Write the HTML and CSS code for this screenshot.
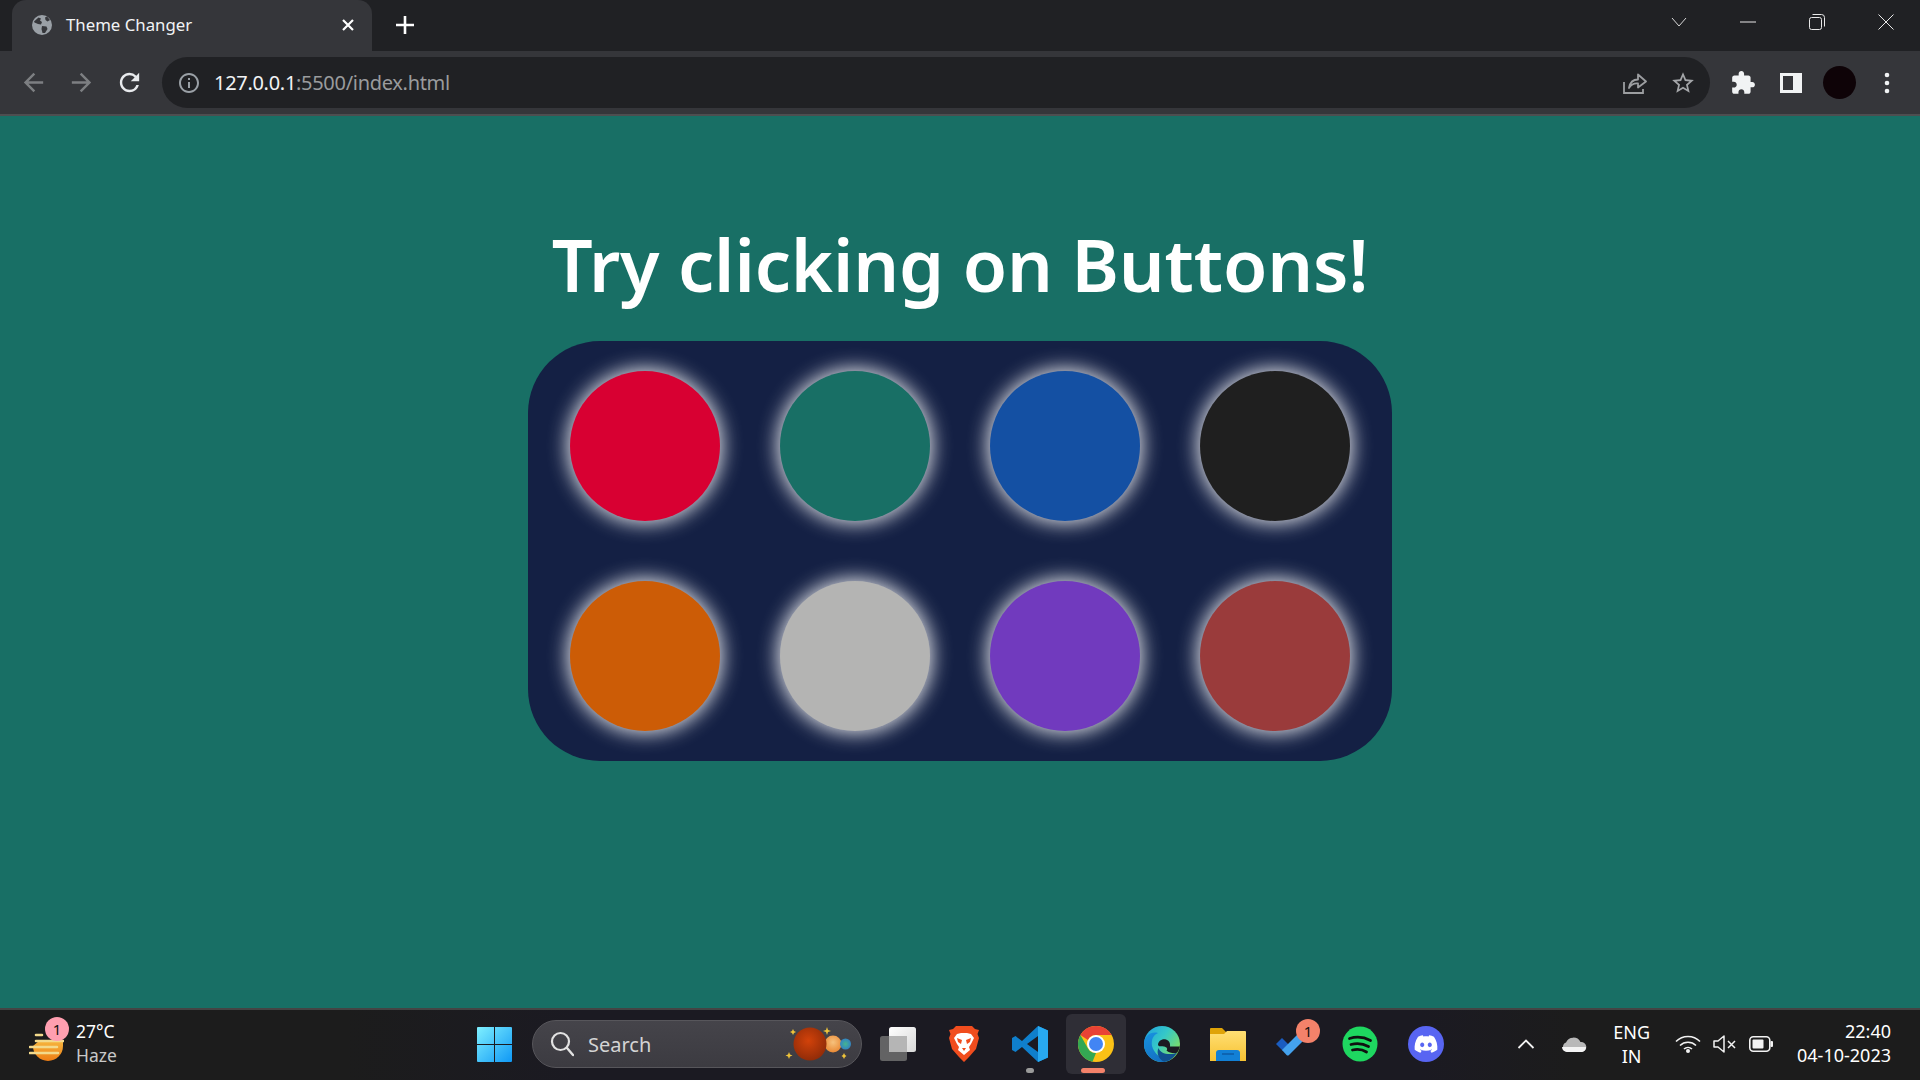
FILE: index.html
```html
<!DOCTYPE html>
<html lang="en">
<head>
<meta charset="utf-8">
<title>Theme Changer</title>
<link rel="stylesheet" href="styles.css">
</head>
<body>
<div class="tabstrip">
  <div class="tab">
    <svg class="favicon" viewBox="0 0 20 20"><circle cx="10" cy="10" r="10" fill="#9aa0a6"/><path d="M2 6.5 6.5 2.5 9 3.5 8 5.5 10 7 9 9.5 6 9 2.500 7.500Z" fill="#35363a"/><path d="M10 11 14.500 11.500 15.500 14 13 18 10.500 18 9.500 14Z" fill="#35363a"/><path d="M13 2.500 15 1.500 18 5 15.500 6.500 13.500 5Z" fill="#35363a"/></svg>
    <span class="tab-title">Theme Changer</span>
    <svg class="tab-close" viewBox="0 0 20 20"><path d="M5 5 15 15M15 5 5 15" stroke="#fff" stroke-width="2.200" fill="none"/></svg>
  </div>
  <svg class="new-tab" viewBox="0 0 20 20"><path d="M10 1V19M1 10H19" stroke="#fff" stroke-width="2.600" fill="none"/></svg>
  <div class="win-controls">
    <div class="win-btn"><svg width="16" height="10" viewBox="0 0 16 10"><path d="M1 1 8 9 15 1" stroke="#d8d8d8" fill="none"/></svg></div>
    <div class="win-btn"><svg width="16" height="4" viewBox="0 0 16 4"><path d="M0 2H16" stroke="#e8e8e8" fill="none"/></svg></div>
    <div class="win-btn"><svg width="16" height="16" viewBox="0 0 16 16"><rect x=".5" y="3.500" width="12" height="12" rx="2" stroke="#e8e8e8" fill="none"/><path d="M3.500 .5H12.500A3 3 0 0 1 15.500 3.500V12.500" stroke="#e8e8e8" fill="none"/></svg></div>
    <div class="win-btn"><svg width="16" height="16" viewBox="0 0 16 16"><path d="M.5 .5 15.500 15.500M15.500 .5 .5 15.500" stroke="#e8e8e8" fill="none"/></svg></div>
  </div>
</div>

<div class="toolbar">
  <div class="tool-btn"><svg width="29" height="29" viewBox="0 0 24 24"><path fill="#7d7f82" d="M20 11H7.830l5.590-5.590L12 4l-8 8 8 8 1.410-1.410L7.830 13H20v-2z"/></svg></div>
  <div class="tool-btn"><svg width="29" height="29" viewBox="0 0 24 24"><path fill="#7d7f82" d="M12 4l-1.410 1.410L16.170 11H4v2h12.170l-5.580 5.590L12 20l8-8z"/></svg></div>
  <div class="tool-btn"><svg width="29" height="29" viewBox="0 0 24 24"><path fill="#e8eaed" d="M17.650 6.350A7.958 7.958 0 0 0 12 4c-4.420 0-7.990 3.580-7.990 8s3.570 8 7.990 8c3.730 0 6.840-2.550 7.730-6h-2.080A5.990 5.990 0 0 1 12 18c-3.310 0-6-2.690-6-6s2.690-6 6-6c1.660 0 3.140.69 4.220 1.780L13 11h7V4l-2.350 2.350z"/></svg></div>
  <div class="omnibox">
    <svg class="info" width="24" height="24" viewBox="0 0 24 24"><path fill="#9aa0a6" d="M11 7h2v2h-2zm0 4h2v6h-2zm1-9C6.480 2 2 6.480 2 12s4.480 10 10 10 10-4.480 10-10S17.520 2 12 2zm0 18c-4.410 0-8-3.590-8-8s3.590-8 8-8 8 3.590 8 8-3.590 8-8 8z"/></svg>
    <span class="url"><span class="url-host">127.0.0.1</span>:5500/index.html</span>
    <div class="omni-actions">
      <div class="tool-btn"><svg width="24" height="23" viewBox="0 0 24 23"><path d="M1 11V22H20V18" stroke="#9c9ea1" stroke-width="1.800" fill="none"/><path d="M6 17C7 11 11 8.500 15 8.500V3.500L23 10.500 15 16.500V12.500C11 12 8 14 6 17Z" stroke="#9c9ea1" stroke-width="1.800" fill="none" stroke-linejoin="round"/></svg></div>
      <div class="tool-btn"><svg width="26" height="26" viewBox="0 0 24 24"><path fill="#a4a6a9" d="M22 9.240l-7.190-.62L12 2 9.190 8.630 2 9.240l5.460 4.730L5.820 21 12 17.270 18.180 21l-1.630-7.030L22 9.240zM12 15.400l-3.760 2.270 1-4.280-3.320-2.880 4.380-.38L12 6.100l1.710 4.040 4.380.38-3.320 2.880 1 4.280L12 15.400z"/></svg></div>
    </div>
  </div>
  <div class="tool-group">
    <div class="tool-btn"><svg width="26" height="26" viewBox="0 0 24 24"><path fill="#f1f3f4" d="M20.500 11H19V7c0-1.100-.9-2-2-2h-4V3.500C13 2.120 11.880 1 10.500 1S8 2.120 8 3.500V5H4c-1.100 0-1.990.9-1.990 2v3.800H3.500c1.490 0 2.700 1.210 2.700 2.700s-1.210 2.700-2.700 2.700H2V20c0 1.100.9 2 2 2h3.800v-1.500c0-1.490 1.210-2.700 2.700-2.700 1.490 0 2.700 1.210 2.700 2.700V22H17c1.100 0 2-.9 2-2v-4h1.500c1.380 0 2.500-1.120 2.500-2.500S21.880 11 20.500 11z"/></svg></div>
    <div class="tool-btn"><svg width="22" height="20" viewBox="0 0 22 20"><path fill-rule="evenodd" fill="#f1f3f4" d="M0 0H22V20H0ZM3 3V17H13V3Z"/></svg></div>
    <div class="tool-btn"><span class="avatar"></span></div>
    <div class="tool-btn"><svg width="6" height="24" viewBox="0 0 6 24"><circle cx="3" cy="4" r="2.300" fill="#f1f3f4"/><circle cx="3" cy="12" r="2.300" fill="#f1f3f4"/><circle cx="3" cy="20" r="2.300" fill="#f1f3f4"/></svg></div>
  </div>
</div>

<main class="page">
  <h1 class="headline">Try clicking on Buttons!</h1>
  <section class="palette">
    <button class="swatch swatch-red"></button>
    <button class="swatch swatch-teal"></button>
    <button class="swatch swatch-blue"></button>
    <button class="swatch swatch-black"></button>
    <button class="swatch swatch-orange"></button>
    <button class="swatch swatch-gray"></button>
    <button class="swatch swatch-purple"></button>
    <button class="swatch swatch-brown"></button>
  </section>
</main>

<footer class="taskbar">
  <div class="tb-left">
    <div class="weather">
      <svg class="weather-icon" width="35" height="30" viewBox="0 0 35 30">
        <defs><linearGradient id="sun" x1="0" y1="0" x2="0" y2="1"><stop offset="0" stop-color="#f6b53e"/><stop offset="1" stop-color="#ee7d14"/></linearGradient></defs>
        <path d="M4 15A15 15 0 0 0 34 15V10H10Z" fill="url(#sun)"/>
        <path d="M7 4H13M7 10H34M1 16H28M1 22H29" stroke="#f3d98b" stroke-width="2.600" stroke-linecap="round" fill="none"/>
      </svg>
      <span class="badge badge-pink">1</span>
      <div class="weather-text"><span>27°C</span><span class="haze">Haze</span></div>
    </div>
  </div>
  <div class="tb-center">
    <div class="app">
      <svg width="35" height="35" viewBox="0 0 35 35">
        <defs><linearGradient id="win" x1="0" y1="0" x2="1" y2="1"><stop offset="0" stop-color="#7ff0ff"/><stop offset="1" stop-color="#0f98f5"/></linearGradient></defs>
        <path fill="url(#win)" d="M1 0H17V17H0V1A1 1 0 0 1 1 0ZM18 0H34A1 1 0 0 1 35 1V17H18ZM0 18H17V35H1A1 1 0 0 1 0 34ZM18 18H35V34A1 1 0 0 1 34 35H18Z"/>
      </svg>
    </div>
    <div class="search">
      <svg width="24" height="26" viewBox="0 0 24 26"><circle cx="10.500" cy="10.500" r="8.500" stroke="#e2e2e2" stroke-width="2.200" fill="none"/><path d="M17 17 23 24" stroke="#e2e2e2" stroke-width="2.400" stroke-linecap="round"/></svg>
      <span class="search-text">Search</span>
      <svg class="planets" width="66" height="36" viewBox="0 0 66 36">
        <defs>
          <radialGradient id="mars" cx=".45" cy=".4" r=".65"><stop offset="0" stop-color="#d2420a"/><stop offset="1" stop-color="#8c2a08"/></radialGradient>
          <radialGradient id="venus" cx=".5" cy=".4" r=".6"><stop offset="0" stop-color="#f6c27d"/><stop offset="1" stop-color="#ea8a35"/></radialGradient>
          <radialGradient id="earth" cx=".5" cy=".5" r=".6"><stop offset="0" stop-color="#45b58f"/><stop offset="1" stop-color="#2f79cc"/></radialGradient>
        </defs>
        <circle cx="48" cy="18" r="8.500" fill="url(#venus)"/>
        <circle cx="60.500" cy="18" r="5.500" fill="url(#earth)"/>
        <circle cx="25" cy="18" r="16.500" fill="url(#mars)"/>
        <path d="M42 1 43 4 46 5 43 6 42 9 41 6 38 5 41 4ZM8 3 9 5 11 6 9 7 8 9 7 7 5 6 7 5ZM4 26 5 28.500 7.500 29.500 5 30.500 4 33 3 30.500.5 29.500 3 28.500ZM59 27 60 29 61.500 30 60 31 59 33 58 31 56.500 30 58 29Z" fill="#eec33a"/>
      </svg>
    </div>
    <div class="app app-taskview">
      <svg width="36" height="34" viewBox="0 0 36 34">
        <defs><linearGradient id="tv" x1="0" y1="0" x2="1" y2="1"><stop offset="0" stop-color="#ffffff"/><stop offset="1" stop-color="#d8d8d8"/></linearGradient></defs>
        <rect x="9" y="0" width="27" height="25" rx="2.500" fill="url(#tv)"/>
        <rect x="0" y="9" width="27" height="25" rx="2.500" fill="#6b6b6b" fill-opacity=".9"/>
        <path d="M9 9H27V25H9Z" fill="#b5b5b5"/>
      </svg>
    </div>
    <div class="app">
      <svg width="30" height="36" viewBox="0 0 30 36">
        <path d="M7 0H23L26 3 30 4 28.500 8 30 12 27 23 20 31 15 36 10 31 3 23 0 12 1.500 8 0 4 4 3Z" fill="#f14d1e"/>
        <path d="M8 8 12 7H18L22 8 25 12 22 18 20 21 21 24 15 29 9 24 10 21 8 18 5 12Z" fill="#fff"/>
        <path d="M8 12 13 14 12 18 9 16ZM22 12 17 14 18 18 21 16ZM13 22H17L15 25Z" fill="#f14d1e"/>
      </svg>
    </div>
    <div class="app app-running">
      <svg width="36" height="36" viewBox="0 0 36 36">
        <path d="M26 0 36 4.500V31.500L26 36 10 21 3.500 26 0 24V12L3.500 10 10 15ZM26 10 15 18 26 26Z" fill="#0f7fcc" fill-rule="evenodd"/>
        <path d="M26 0 36 4.500V31.500L26 36Z" fill="#28a9f0"/>
      </svg>
    </div>
    <div class="app app-active">
      <svg width="36" height="36" viewBox="0 0 36 36">
        <circle cx="18" cy="18" r="18" fill="#fbc116"/>
        <path d="M18 0A18 18 0 0 1 33.600 9H18A9 9 0 0 0 9.900 14L2.400 9A18 18 0 0 1 18 0Z" fill="#e94235"/>
        <path d="M2.400 9 10 22.500A9 9 0 0 0 18 27L14.500 35.700A18 18 0 0 1 2.400 9Z" fill="#34a853"/>
        <circle cx="18" cy="18" r="9" fill="#fff"/>
        <circle cx="18" cy="18" r="7" fill="#4285f4"/>
      </svg>
    </div>
    <div class="app">
      <svg width="36" height="36" viewBox="0 0 36 36">
        <defs>
          <linearGradient id="edge1" x1="0" y1="0" x2="1" y2=".7"><stop offset="0" stop-color="#1f9fe0"/><stop offset=".5" stop-color="#35c8c8"/><stop offset="1" stop-color="#86e05a"/></linearGradient>
          <linearGradient id="edge2" x1="0" y1="0" x2=".4" y2="1"><stop offset="0" stop-color="#1792e0"/><stop offset="1" stop-color="#1472c4"/></linearGradient>
        </defs>
        <circle cx="18" cy="18" r="18" fill="url(#edge1)"/>
        <path d="M0 18C0 10 7 5 14 7 9 9 7 14 8 20 10 28 18 34 27 33.500 24 35.500 21 36 18 36 8 36 0 28 0 18Z" fill="url(#edge2)"/>
        <path d="M14 19C14 15 18 12.500 22 13.500 25 14.300 26.500 17 26 20.500H35.800C35.300 23 34.300 25 33 26.800 30 27.500 25 27 22.500 24.500 24 23 23 21 20 20.500 17 20 15 21 14 19Z" fill="#1b1a22"/>
        <path d="M14.500 22C16 27 24 30 33 26.800 30 32 25 35 20.500 35.800 15 34 12 27 14.500 22Z" fill="#10508f"/>
      </svg>
    </div>
    <div class="app">
      <svg width="36" height="33" viewBox="0 0 36 33">
        <defs><linearGradient id="fold" x1="0" y1="0" x2="0" y2="1"><stop offset="0" stop-color="#ffdf74"/><stop offset="1" stop-color="#f7c232"/></linearGradient></defs>
        <path d="M1 0H12L16 4H36V8H0V1A1 1 0 0 1 1 0Z" fill="#dfa308"/>
        <path d="M0 6H14L17 3H35A1 1 0 0 1 36 4V33H0Z" fill="url(#fold)"/>
        <path d="M6 33V25A3 3 0 0 1 9 22H27A3 3 0 0 1 30 25V33Z" fill="#1280d6"/>
        <path d="M12 26H24" stroke="#0d5ba6" stroke-width="1.500"/>
      </svg>
    </div>
    <div class="app app-badged">
      <svg class="todo" width="30" height="24" viewBox="0 0 30 24">
        <path d="M0 12 6 6 13 13 7 19Z" fill="#1a5cc0"/>
        <path d="M6 18 24 0 30 6 13 23A2 2 0 0 1 10.500 23Z" fill="#44a2ee"/>
      </svg>
      <span class="badge badge-coral">1</span>
    </div>
    <div class="app">
      <svg width="36" height="36" viewBox="0 0 36 36">
        <circle cx="18" cy="18" r="17.500" fill="#1ed760"/>
        <path d="M7.500 12.500C14 10.500 22 11 28.500 14.500M9 18.500C14.500 17 21 17.500 26.500 20.500M10.500 24C15 23 20.500 23.500 24.500 26" stroke="#101010" stroke-width="2.800" stroke-linecap="round" fill="none"/>
      </svg>
    </div>
    <div class="app">
      <svg width="36" height="36" viewBox="0 0 36 36">
        <circle cx="18" cy="18" r="18" fill="#5865f2"/>
        <g transform="translate(6.600 6.600) scale(.95)"><path fill="#fff" d="M20.317 4.3698a19.7913 19.7913 0 00-4.8851-1.5152.0741.0741 0 00-.0785.0371c-.211.3753-.4447.8648-.6083 1.2495-1.8447-.2762-3.68-.2762-5.4868 0-.1636-.3933-.4058-.8742-.6177-1.2495a.077.077 0 00-.0785-.037 19.7363 19.7363 0 00-4.8852 1.515.0699.0699 0 00-.0321.0277C.5334 9.0458-.319 13.5799.0992 18.0578a.0824.0824 0 00.0312.0561c2.0528 1.5076 4.0413 2.4228 5.9929 3.0294a.0777.0777 0 00.0842-.0276c.4616-.6304.8731-1.2952 1.226-1.9942a.076.076 0 00-.0416-.1057c-.6528-.2476-1.2743-.5495-1.8722-.8923a.077.077 0 01-.0076-.1277c.1258-.0943.2517-.1923.3718-.2914a.0743.0743 0 01.0776-.0105c3.9278 1.7933 8.18 1.7933 12.0614 0a.0739.0739 0 01.0785.0095c.1202.099.246.1981.3728.2924a.077.077 0 01-.0066.1276 12.2986 12.2986 0 01-1.873.8914.0766.0766 0 00-.0407.1067c.3604.698.7719 1.3628 1.225 1.9932a.076.076 0 00.0842.0286c1.961-.6067 3.9495-1.5219 6.0023-3.0294a.077.077 0 00.0313-.0552c.5004-5.177-.8382-9.6739-3.5485-13.6604a.061.061 0 00-.0312-.0286zM8.02 15.3312c-1.1825 0-2.1569-1.0857-2.1569-2.419 0-1.3332.9555-2.4189 2.157-2.4189 1.2108 0 2.1757 1.0952 2.1568 2.419 0 1.3332-.9555 2.4189-2.1569 2.4189zm7.9748 0c-1.1825 0-2.1569-1.0857-2.1569-2.419 0-1.3332.9554-2.4189 2.1569-2.4189 1.2108 0 2.1757 1.0952 2.1568 2.419 0 1.3332-.946 2.4189-2.1568 2.4189Z"/></g>
      </svg>
    </div>
  </div>
  <div class="tb-right">
    <div class="tray-chevron"><svg width="18" height="10" viewBox="0 0 18 10"><path d="M1.500 9 9 1.500 16.500 9" stroke="#f2f2f2" stroke-width="1.800" fill="none"/></svg></div>
    <div class="tray-cloud"><svg width="26" height="16" viewBox="0 0 26 16"><path d="M6 16A5 5 0 0 1 5 6.500 8 8 0 0 1 19.500 6 5 5 0 0 1 21 16Z" fill="#b9b9b9"/><path d="M1 11H25A5 5 0 0 1 21 16H6A5 5 0 0 1 1 11Z" fill="#f4f4f4"/></svg></div>
    <div class="lang"><span>ENG</span><span>IN</span></div>
    <div class="tray-icons">
      <svg width="26" height="18" viewBox="0 0 26 18"><path d="M1 6.500A17 17 0 0 1 25 6.500M5 10.500A11.500 11.500 0 0 1 21 10.500M9 14A6 6 0 0 1 17 14" stroke="#f2f2f2" stroke-width="1.600" fill="none"/><circle cx="13" cy="16" r="2" fill="#f2f2f2"/></svg>
      <svg width="24" height="18" viewBox="0 0 24 18"><path d="M1 6H5L11 1V17L5 12H1Z" stroke="#f2f2f2" stroke-width="1.500" fill="none" stroke-linejoin="round"/><path d="M15 6 22 13M22 6 15 13" stroke="#f2f2f2" stroke-width="1.500" fill="none"/></svg>
      <svg width="24" height="16" viewBox="0 0 24 16"><rect x=".8" y=".8" width="20" height="14.400" rx="3.500" stroke="#f2f2f2" stroke-width="1.600" fill="none"/><rect x="3.500" y="3.500" width="11" height="9" rx="1" fill="#f2f2f2"/><rect x="21.500" y="5" width="2.500" height="6" rx="1" fill="#f2f2f2"/></svg>
    </div>
    <div class="clock"><span>22:40</span><span>04-10-2023</span></div>
  </div>
</footer>
</body>
</html>
```

FILE: styles.css
```css
* { box-sizing: border-box; }
html, body { margin: 0; height: 100%; }
body {
  display: flex;
  flex-direction: column;
  height: 100vh;
  overflow: hidden;
  font-family: "Noto Sans", "Open Sans", sans-serif;
  background: #186f65;
}

/* Browser chrome */
.tabstrip {
  display: flex;
  align-items: flex-end;
  height: 51px;
  flex: none;
  background: #202124;
}
.tab {
  display: flex;
  align-items: center;
  width: 360px;
  height: 51px;
  margin-left: 12px;
  padding: 0 14px 2px 20px;
  background: #35363a;
  border-radius: 14px 14px 0 0;
}
.favicon { width: 20px; height: 20px; flex: none; }
.tab-title {
  margin-left: 14px;
  color: #f1f3f4;
  font-size: 16.800px;
  white-space: nowrap;
}
.tab-close { width: 20px; height: 20px; margin-left: auto; }
.new-tab { width: 20px; height: 20px; margin: 0 0 16px 23px; }
.win-controls { display: flex; align-self: stretch; margin-left: auto; }
.win-btn {
  display: flex;
  align-items: center;
  justify-content: center;
  width: 69px;
  height: 43px;
}
.toolbar {
  display: flex;
  align-items: center;
  flex: none;
  height: 65px;
  padding: 0 9px;
  background: #35363a;
  border-bottom: 2px solid #4d4e50;
}
.tool-btn {
  display: flex;
  align-items: center;
  justify-content: center;
  width: 48px;
  height: 48px;
  flex: none;
}
.omnibox {
  display: flex;
  align-items: center;
  flex: 1;
  height: 51px;
  margin-left: 9px;
  padding: 0 3px 0 15px;
  background: #202124;
  border-radius: 26px;
}
.info { flex: none; }
.url {
  margin-left: 13px;
  color: #9a9b9d;
  font-size: 20px;
  letter-spacing: -.3px;
}
.url-host { color: #f1f3f4; }
.omni-actions { display: flex; margin-left: auto; }
.tool-group { display: flex; margin-left: 9px; }
.avatar {
  display: block;
  width: 33px;
  height: 33px;
  border-radius: 50%;
  background: #0e0307;
}

/* Page */
.page {
  flex: 1;
  display: flex;
  flex-direction: column;
  align-items: center;
  background: #186f65;
}
.headline {
  margin: 103px 0 32px;
  height: 90px;
  color: #fff;
  font-size: 72px;
  font-weight: 600;
  line-height: 90px;
  letter-spacing: -.1px;
  white-space: nowrap;
}
.palette {
  display: grid;
  grid-template-columns: repeat(4, 150px);
  gap: 60px;
  padding: 30px 42px;
  width: 864px;
  height: 420px;
  background: #142044;
  border-radius: 72px;
}
.swatch {
  display: block;
  width: 150px;
  height: 150px;
  padding: 0;
  border: 0;
  border-radius: 50%;
  box-shadow: 0 0 20px 2px rgba(255, 255, 255, .9);
}
.swatch-red { background: #d80032; }
.swatch-teal { background: #186f65; }
.swatch-blue { background: #1450a3; }
.swatch-black { background: #1f1f1f; }
.swatch-orange { background: #cc5c06; }
.swatch-gray { background: #b4b4b3; }
.swatch-purple { background: #713abe; }
.swatch-brown { background: #9a3b3b; }

/* Taskbar */
.taskbar {
  display: flex;
  flex: none;
  height: 72px;
  padding-bottom: 2px;
  color: #fff;
  background: linear-gradient(90deg, #1c1c1c 18%, #1b1a22 30%, #1b1a22 74%, #1c1c1c 82%);
  border-top: 2px solid #444;
}
.tb-left { width: 461px; flex: none; }
.weather { position: relative; display: flex; align-items: center; height: 68px; padding-left: 29px; }
.weather-icon { flex: none; margin-top: 4px; }
.weather-text {
  display: flex;
  flex-direction: column;
  margin: -2px 0 0 12px;
  font-size: 17.500px;
  line-height: 24px;
}
.haze { color: #c8c8c8; }
.badge {
  position: absolute;
  display: flex;
  align-items: center;
  justify-content: center;
  width: 24px;
  height: 24px;
  border-radius: 50%;
  color: #111;
  font-size: 15px;
}
.badge-pink { left: 45px; top: 7px; background: #ff9fb0; }
.badge-coral { right: 7px; top: 9px; background: #f4826a; }
.tb-center { display: flex; align-items: center; height: 68px; }
.app {
  position: relative;
  display: flex;
  align-items: center;
  justify-content: center;
  width: 66px;
  height: 68px;
  flex: none;
}
.todo { margin-right: 6px; }
.app-running::after {
  content: "";
  position: absolute;
  left: 29px;
  bottom: 5px;
  width: 8px;
  height: 5px;
  border-radius: 3px;
  background: #9a9a9a;
}
.app-active::before {
  content: "";
  position: absolute;
  left: 3px;
  top: 4px;
  width: 60px;
  height: 60px;
  border-radius: 6px;
  background: #2f2e36;
}
.app-active::after {
  content: "";
  position: absolute;
  left: 18px;
  bottom: 5px;
  width: 24px;
  height: 5px;
  border-radius: 3px;
  background: #f4826a;
}
.app-active svg { position: relative; }
.search {
  display: flex;
  align-items: center;
  width: 330px;
  height: 48px;
  margin: 0 3px 0 5px;
  padding: 0 10px 0 17px;
  background: linear-gradient(#45444a, #3c3b41);
  border: 1px solid #57565b;
  border-radius: 24px;
}
.search-text { margin-left: 14px; color: #d4d4d4; font-size: 20px; }
.planets { margin-left: auto; }
.tb-right {
  display: flex;
  align-items: center;
  margin-left: auto;
  padding-right: 29px;
  font-size: 18px;
  color: #fff;
}
.tray-chevron { display: flex; margin-right: 26px; }
.tray-cloud { display: flex; margin-right: 26px; }
.lang {
  display: flex;
  flex-direction: column;
  align-items: center;
  margin-right: 25px;
  line-height: 24px;
}
.tray-icons { display: flex; align-items: center; gap: 12px; margin-right: 24px; }
.clock {
  display: flex;
  flex-direction: column;
  align-items: flex-end;
  margin-top: -2px;
  line-height: 24px;
}
```
